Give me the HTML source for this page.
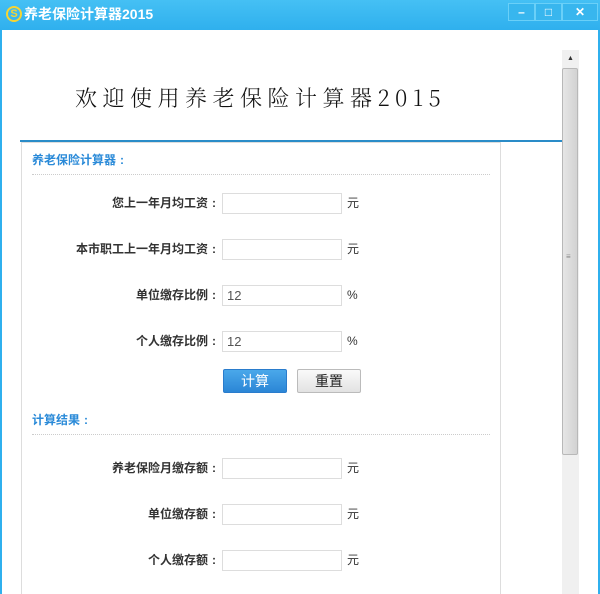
<!DOCTYPE html>
<html style="overflow:hidden;height:594px"><head><meta charset="utf-8"><style>
*{margin:0;padding:0;box-sizing:border-box}
body{width:600px;height:594px;overflow:hidden;background:#fff;font-family:"Liberation Sans","Noto Sans CJK SC",sans-serif;position:relative}
.tb{position:absolute;left:0;top:0;width:600px;height:30px;background:linear-gradient(#45c0f4,#2fb0ee);}
.lb{position:absolute;left:0;top:30px;width:2px;height:564px;background:#2fb0ee}
.rb{position:absolute;right:0;top:30px;width:2px;height:564px;background:#2fb0ee}
.ttl{position:absolute;left:24px;top:6px;color:#fff;font-weight:bold;font-size:14px;line-height:16px}
.ico{position:absolute;left:6px;top:6px;width:16px;height:16px;border-radius:50%;border:2px solid #f6d432;color:#f6d432;font-size:11px;font-weight:bold;text-align:center;line-height:12px}
.wb{position:absolute;top:3px;height:18px;border:1px solid #6ad0f8;background:#38b6ee;color:#fff;font-size:12px;text-align:center;line-height:16px;font-weight:bold}
.sb{position:absolute;left:562px;top:50px;width:17px;height:544px;background:#f0f0f0}
.thumb{position:absolute;left:562px;top:68px;width:16px;height:387px;background:linear-gradient(90deg,#e6e6e6,#d2d2d2);border:1px solid #b8b8b8;border-radius:2px}
.head{position:absolute;left:75px;top:82px;font-family:"Noto Serif CJK SC",serif;font-size:22px;letter-spacing:5.5px;color:#111;font-weight:300}
.bl{position:absolute;left:20px;top:140px;width:542px;height:2px;background:#2a8cc8}
.panel{position:absolute;left:21px;top:142px;width:480px;height:452px;border:1px solid #ddd;border-bottom:none}
.sh{position:absolute;left:32px;font-size:12px;font-weight:bold;color:#2a8ad8}
.dl{position:absolute;left:32px;width:458px;border-top:1px dotted #ccc}
.lab{position:absolute;right:380px;font-size:12px;font-weight:bold;color:#333;line-height:14px}
.c{display:inline-block;width:12px;text-align:center}
.in{position:absolute;left:222px;width:120px;height:21px;border:1px solid #ddd;font-size:13px;color:#555;padding-left:4px;line-height:19px}
.u{position:absolute;left:347px;font-size:12px;color:#333;line-height:14px}
.btn{position:absolute;top:369px;width:64px;height:24px;font-size:14px;text-align:center;line-height:22px;border-radius:2px}
</style></head><body>
<div class="tb"></div><div class="lb"></div><div class="rb"></div>
<div class="ico">S</div><div class="ttl">养老保险计算器2015</div>
<div class="wb" style="left:508px;width:27px">–</div>
<div class="wb" style="left:535px;width:27px">□</div>
<div class="wb" style="left:562px;width:36px">✕</div>
<div class="sb"><div style="text-align:center;font-size:7px;color:#333;margin-top:5px">▲</div></div>
<div class="thumb"><div style="position:absolute;top:186px;left:3px;width:8px;font-size:8px;line-height:3px;color:#888">≡</div></div>
<div class="head">欢迎使用养老保险计算器2015</div>
<div class="bl"></div>
<div class="panel"></div>
<div class="sh" style="top:151px">养老保险计算器<span class="c">:</span></div>
<div class="dl" style="top:174px"></div>
<div class="lab" style="top:196px">您上一年月均工资<span class="c">:</span></div><div class="in" style="top:193px"></div><div class="u" style="top:196px">元</div>
<div class="lab" style="top:242px">本市职工上一年月均工资<span class="c">:</span></div><div class="in" style="top:239px"></div><div class="u" style="top:242px">元</div>
<div class="lab" style="top:288px">单位缴存比例<span class="c">:</span></div><div class="in" style="top:285px">12</div><div class="u" style="top:288px">%</div>
<div class="lab" style="top:334px">个人缴存比例<span class="c">:</span></div><div class="in" style="top:331px">12</div><div class="u" style="top:334px">%</div>
<div class="btn" style="left:223px;background:linear-gradient(#4aa8ea,#2b86d6);color:#fff;border:1px solid #2a7ccc">计算</div>
<div class="btn" style="left:297px;background:linear-gradient(#fafafa,#e2e2e2);color:#222;border:1px solid #bbb">重置</div>
<div class="sh" style="top:411px">计算结果<span class="c">:</span></div>
<div class="dl" style="top:434px"></div>
<div class="lab" style="top:461px">养老保险月缴存额<span class="c">:</span></div><div class="in" style="top:458px"></div><div class="u" style="top:461px">元</div>
<div class="lab" style="top:507px">单位缴存额<span class="c">:</span></div><div class="in" style="top:504px"></div><div class="u" style="top:507px">元</div>
<div class="lab" style="top:553px">个人缴存额<span class="c">:</span></div><div class="in" style="top:550px"></div><div class="u" style="top:553px">元</div>
</body></html>
